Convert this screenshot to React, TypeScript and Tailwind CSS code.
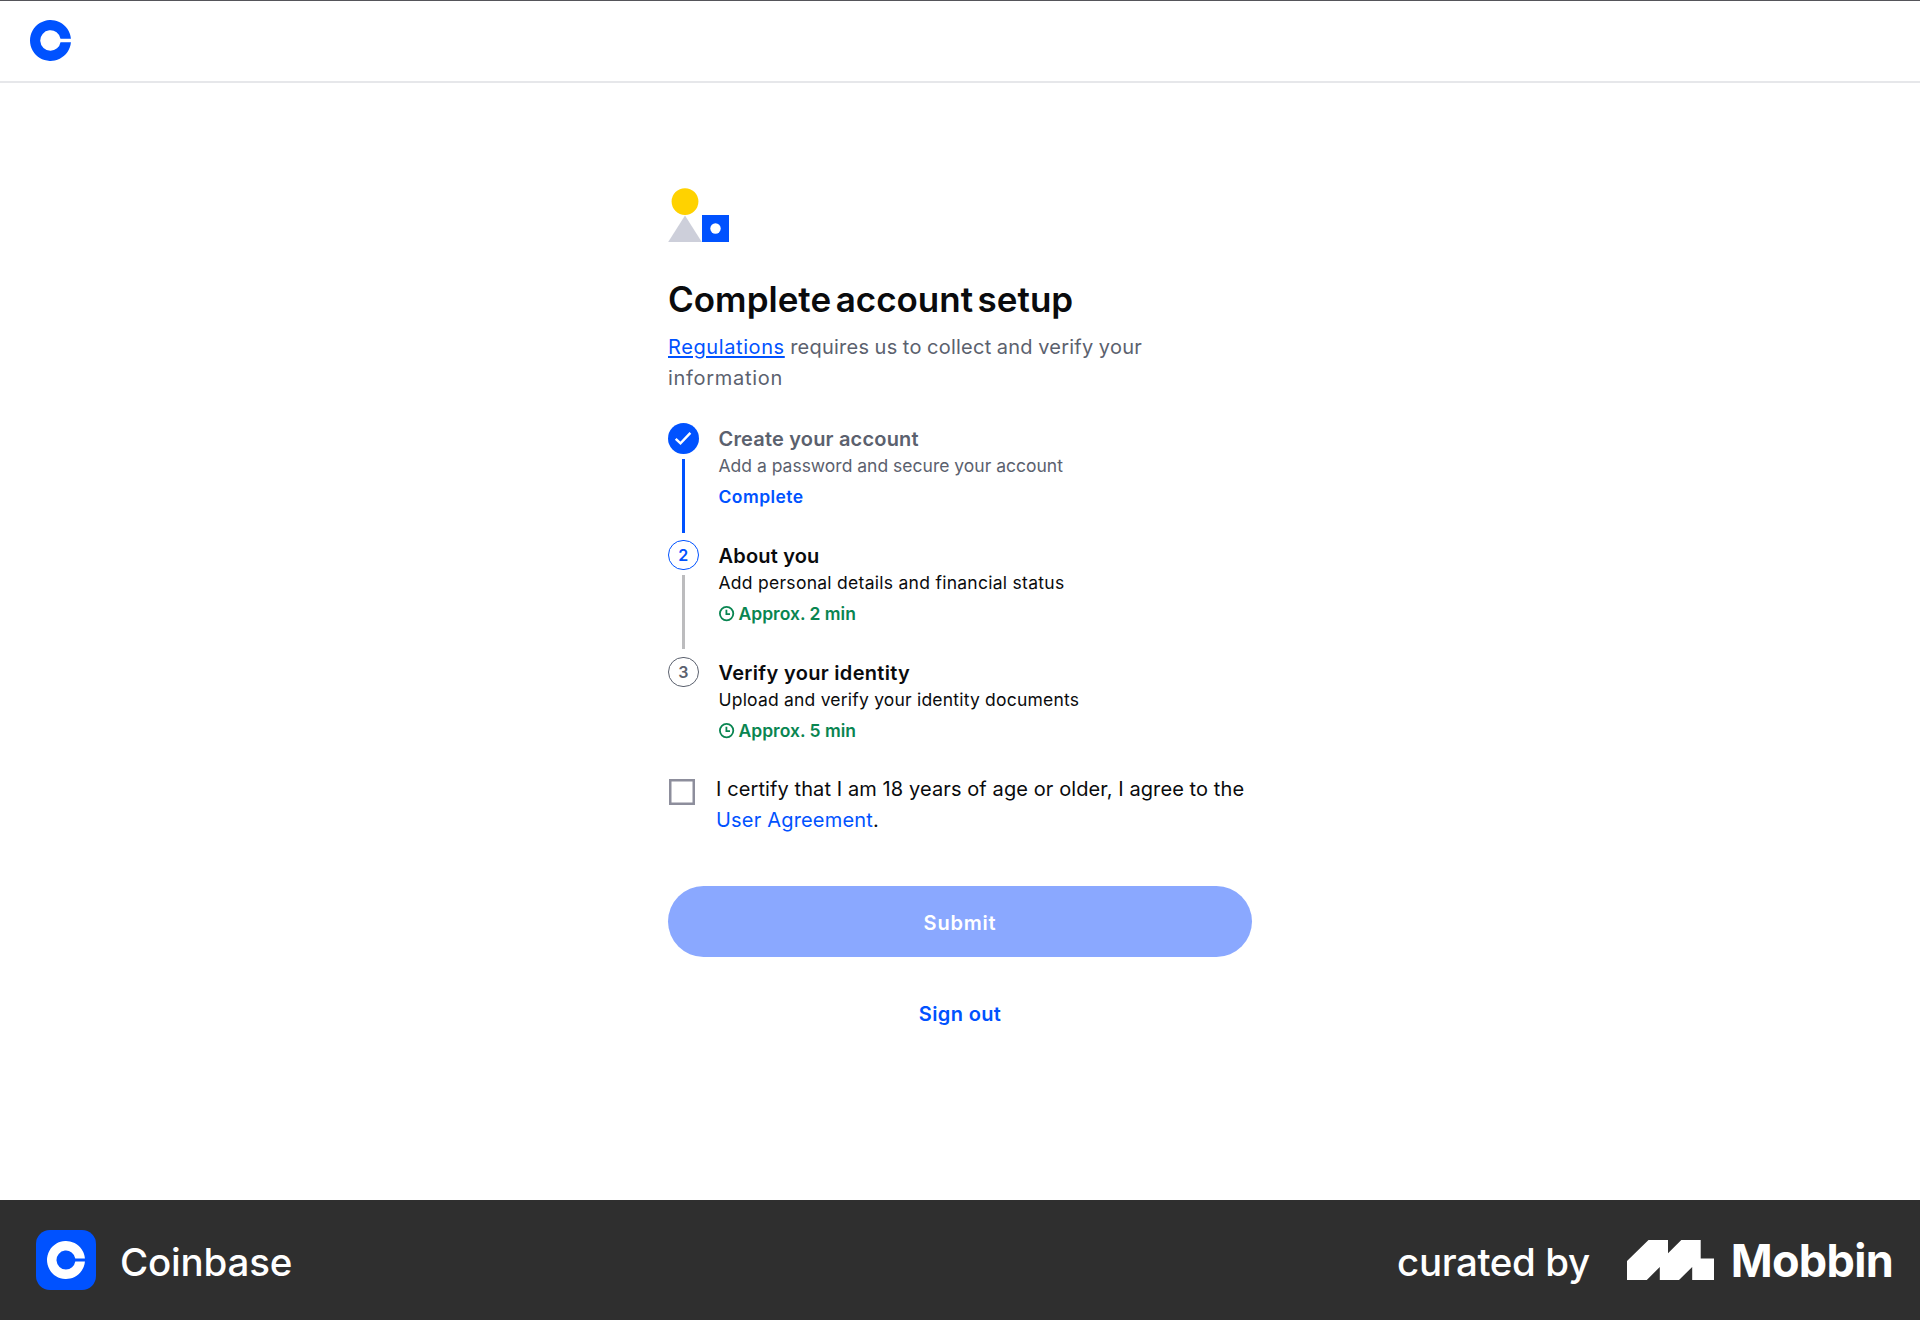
import type { ReactNode } from "react";

function CoinbaseMark({ className }: { className?: string }) {
  return (
    <svg viewBox="0 0 41 41" className={className} fill="currentColor" aria-hidden="true">
      <path d="M20.5 30.7A10.2 10.2 0 1 1 30.5 18.8H40.93A20.5 20.5 0 1 0 40.93 22.2H30.5A10.2 10.2 0 0 1 20.5 30.7Z" />
    </svg>
  );
}

function MobbinMark() {
  return (
    <svg width="87" height="40" viewBox="0 0 87 40" fill="currentColor" aria-hidden="true">
      <path d="M0 21 21.5 0H41V13.3L54.3 0H73.7V18.5H87V40H65.2V27L52 40H32.8V27L19.8 40H0Z" />
    </svg>
  );
}

function SetupIllustration() {
  return (
    <svg width="62" height="54" viewBox="0 0 62 54" className="block" aria-hidden="true">
      <circle cx="17" cy="13.6" r="13.4" fill="#ffd200" />
      <path d="M17 27.4 33.8 54H0.2Z" fill="#cdcfda" />
      <path d="M34 27H61V54H34Z" fill="#0052ff" />
      <circle cx="47.5" cy="40.5" r="5.2" fill="#fff" />
    </svg>
  );
}

function Check() {
  return (
    <svg width="30" height="30" viewBox="0 0 30 30" fill="none" stroke="#fff" strokeWidth="2.4" aria-hidden="true">
      <path d="M7.7 15.8 12.5 20.4 22.4 9.9" />
    </svg>
  );
}

function Clock() {
  return (
    <svg width="16" height="16" viewBox="0 0 16 16" fill="none" stroke="currentColor" strokeWidth="1.8" aria-hidden="true">
      <circle cx="7.6" cy="7.6" r="6.7" />
      <path d="M7.4 3.8V8.2H11" />
    </svg>
  );
}

function Duration({ children }: { children: ReactNode }) {
  return (
    <div className="flex items-center gap-1 text-[#098551]">
      <Clock />
      <span>{children}</span>
    </div>
  );
}

interface StepProps {
  badge: ReactNode;
  badgeClass: string;
  lineClass?: string;
  title: ReactNode;
  detail: ReactNode;
  meta: ReactNode;
  textClass: string;
}

function Step({ badge, badgeClass, lineClass, title, detail, meta, textClass }: StepProps) {
  return (
    <li className="flex h-[116.75px] gap-5">
      <div className="flex w-[30.5px] flex-col items-center gap-[5px]">
        <div className={`flex size-[30.5px] shrink-0 items-center justify-center rounded-full text-base font-semibold ${badgeClass}`}>
          {badge}
        </div>
        {lineClass && <div className={`h-[74px] w-[2.5px] ${lineClass}`} />}
      </div>
      <div className={textClass}>
        <h2 className="text-[20px] leading-[32px] font-semibold">{title}</h2>
        <p className="-mt-[0.75px] text-[17.5px] leading-[24px]">{detail}</p>
        <div className="mt-[6.75px] text-[17.5px] leading-[24px] font-semibold">{meta}</div>
      </div>
    </li>
  );
}

export default function App() {
  return (
    <div className="flex h-[1320px] w-[1920px] flex-col bg-white font-['Inter','Liberation_Sans',sans-serif] whitespace-nowrap text-[#0a0b0d]">
      <header className="flex h-[83px] items-center border-t border-b-2 border-t-[#55555a] border-b-[#e6e7ea] pb-[2px] pl-[30px]">
        <CoinbaseMark className="size-[41px] text-[#0052ff]" />
      </header>

      <main className="mx-auto flex w-[584px] grow flex-col pt-[105px]">
        <SetupIllustration />
        <h1 className="mt-[37px] text-[35px] leading-[41px] font-semibold tracking-[0.01px] [word-spacing:-4.3px]">Complete account setup</h1>
        <p className="mt-[12px] text-[20px] leading-[30.5px] text-[#5b616e]">
          <a className="tracking-[0.6px] text-[#0052ff] underline decoration-2 underline-offset-2">Regulations</a>
          <span className="tracking-[0.24px] [word-spacing:-0.5px]"> requires us to collect and verify your</span>
          <br />
          <span className="tracking-[0.7px]">information</span>
        </p>

        <ol className="mt-[30px]">
          <Step
            badge={<Check />}
            badgeClass="bg-[#0052ff]"
            lineClass="bg-[#0052ff]"
            textClass="text-[#5b616e]"
            title={<span className="tracking-[0.182px]">Create your account</span>}
            detail={<span>Add a password and secure your account</span>}
            meta={<span className="tracking-[0.45px] text-[#0052ff]">Complete</span>}
          />
          <Step
            badge="2"
            badgeClass="border-[1.5px] border-[#0052ff] text-[#0052ff]"
            lineClass="bg-[#bcbcbe]"
            textClass="text-[#0a0b0d]"
            title={<span className="tracking-[0.18px]">About you</span>}
            detail={<span className="tracking-[0.276px]">Add personal details and financial status</span>}
            meta={<Duration>Approx. 2 min</Duration>}
          />
          <Step
            badge="3"
            badgeClass="border-[1.5px] border-[#5b616e] text-[#5b616e]"
            textClass="text-[#0a0b0d]"
            title={<span className="tracking-[0.32px]">Verify your identity</span>}
            detail={<span className="tracking-[0.205px]">Upload and verify your identity documents</span>}
            meta={<Duration>Approx. 5 min</Duration>}
          />
        </ol>

        <div className="mt-px flex gap-[21px]">
          <button
            type="button"
            role="checkbox"
            aria-checked="false"
            aria-label="Certify"
            className="mt-[5px] ml-px size-[26px] shrink-0 bg-white ring-[2.5px] ring-[#8d8e9c] ring-inset"
          />
          <p className="text-[20px] leading-[30.5px]">
            <span className="tracking-[0.095px]">I certify that I am 18 years of age or older, I agree to the</span>
            <br />
            <span className="tracking-[0.188px]">
              <a className="text-[#0052ff]">User Agreement</a>.
            </span>
          </p>
        </div>

        <button
          type="button"
          className="mt-[51px] h-[71px] w-full rounded-full bg-[#8aa8ff] pt-[2px] text-[20px] font-semibold tracking-[0.8px] text-white"
        >
          Submit
        </button>
        <button type="button" className="mt-[42px] self-center text-[20px] leading-[30px] font-semibold tracking-[0.364px] text-[#0052ff]">
          Sign out
        </button>
      </main>

      <footer className="flex h-[120px] shrink-0 items-center bg-[#2f2f2f] pr-[27px] pl-9 text-white">
        <div className="flex size-[60px] items-center justify-center rounded-[14px] bg-[#0052ff]">
          <CoinbaseMark className="size-[38px]" />
        </div>
        <span className="ml-6 pt-[3px] text-[38.5px] leading-[48px] font-medium tracking-[-0.2px]">Coinbase</span>
        <span className="ml-auto pt-[3px] text-[38.5px] leading-[48px] font-medium tracking-[-0.4px]">curated by</span>
        <div className="ml-[37px]">
          <MobbinMark />
        </div>
        <span className="ml-[17px] pt-px text-[45px] leading-[54px] font-bold tracking-[-0.69px]">Mobbin</span>
      </footer>
    </div>
  );
}
